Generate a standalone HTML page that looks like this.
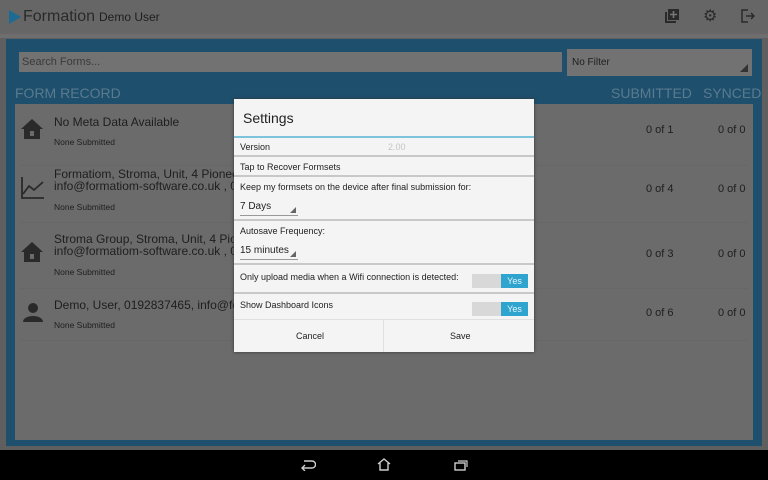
<!DOCTYPE html><html><head><style>
*{margin:0;padding:0;box-sizing:border-box}
body{width:768px;height:480px;overflow:hidden;background:#5f5f5f;font-family:"Liberation Sans",sans-serif;position:relative}
.a{position:absolute}
.t{color:#1e1e1e;white-space:nowrap}
.dl{position:absolute;left:0;right:0;height:2px;background:#c8c8c8}
.dt{position:absolute;left:6px;font-size:9px;color:#222;white-space:nowrap}
</style></head><body>
<div class="a" style="left:0;top:0;width:768px;height:34px;background:#666"></div>
<div class="a" style="left:0;top:34px;width:768px;height:4px;background:#6e6e6e"></div>
<svg class="a" style="left:9px;top:10px" width="12" height="14"><path d="M0 0L12 7L0 14Z" fill="#1d6a93"/></svg>
<div class="a t" style="left:23px;top:8px;font-size:16px;color:#2a2a2a">Formation</div>
<div class="a t" style="left:99px;top:10px;font-size:12px">Demo User</div>
<svg class="a" style="left:665px;top:9px" width="14" height="14"><rect x="3" y="0" width="11" height="11" fill="#2a2a2a"/><rect x="0" y="3" width="2" height="11" fill="#2a2a2a"/><rect x="0" y="12" width="11" height="2" fill="#2a2a2a"/><path d="M8.5 2v7M5 5.5h7" stroke="#777" stroke-width="1.6"/></svg>
<div class="a t" style="left:703px;top:6px;font-size:16px;color:#2a2a2a">⚙</div>
<svg class="a" style="left:741px;top:9px" width="14" height="14"><path d="M7 1H1v12h6" fill="none" stroke="#2a2a2a" stroke-width="1.5"/><path d="M5 7h8M10 4l3 3-3 3" fill="none" stroke="#2a2a2a" stroke-width="1.5"/></svg>
<div class="a" style="left:6px;top:39px;width:756px;height:407px;background:#1e4f6d"></div>
<div class="a" style="left:19px;top:52px;width:543px;height:20px;background:#727272"></div>
<div class="a t" style="left:22px;top:56px;font-size:11px;color:#3a3a3a">Search Forms...</div>
<div class="a" style="left:567px;top:49px;width:185px;height:27px;background:#727272"></div>
<div class="a t" style="left:572px;top:57px;font-size:10px">No Filter</div>
<svg class="a" style="left:740px;top:64px" width="8" height="8"><path d="M8 0V8H0Z" fill="#333"/></svg>
<div class="a t" style="left:15px;top:85px;font-size:14px;color:#5a7a8e">FORM RECORD</div>
<div class="a t" style="left:611px;top:85px;font-size:14px;color:#5a7a8e">SUBMITTED</div>
<div class="a t" style="left:703px;top:85px;font-size:14px;color:#5a7a8e">SYNCED</div>
<div class="a" style="left:15px;top:104px;width:738px;height:336px;background:#6b6b6b"></div>
<div class="a" style="left:20px;top:165px;width:728px;height:1px;background:#676767"></div>
<div class="a" style="left:20px;top:222px;width:728px;height:1px;background:#676767"></div>
<div class="a" style="left:20px;top:288px;width:728px;height:1px;background:#676767"></div>
<div class="a" style="left:20px;top:340px;width:728px;height:1px;background:#676767"></div>
<svg class="a" style="left:21px;top:119px" width="22" height="20"><path d="M11 0L22 10H19V20H3V10H0Z" fill="#2a2a2a"/><rect x="9" y="12" width="4" height="5" fill="#6b6b6b"/></svg>
<svg class="a" style="left:21px;top:177px" width="24" height="22"><path d="M1 0V21H23M2 17L8 9L13 13L22 5" fill="none" stroke="#2a2a2a" stroke-width="1.8"/></svg>
<svg class="a" style="left:21px;top:242px" width="22" height="20"><path d="M11 0L22 10H19V20H3V10H0Z" fill="#2a2a2a"/><rect x="9" y="12" width="4" height="5" fill="#6b6b6b"/></svg>
<svg class="a" style="left:22px;top:302px" width="22" height="20"><circle cx="11" cy="6" r="5" fill="#2a2a2a"/><path d="M1 20C1 12 21 12 21 20Z" fill="#2a2a2a"/></svg>
<div class="a t" style="left:54px;top:115px;font-size:12px">No Meta Data Available</div>
<div class="a t" style="left:54px;top:137px;font-size:8.5px">None Submitted</div>
<div class="a t" style="left:54px;top:168px;font-size:12px;line-height:12px">Formatiom, Stroma, Unit, 4 Pioneer W<br>info@formatiom-software.co.uk , 019</div>
<div class="a t" style="left:54px;top:202px;font-size:8.5px">None Submitted</div>
<div class="a t" style="left:54px;top:233px;font-size:12px;line-height:12px">Stroma Group, Stroma, Unit, 4 Pioneer<br>info@formatiom-software.co.uk , 029</div>
<div class="a t" style="left:54px;top:267px;font-size:8.5px">None Submitted</div>
<div class="a t" style="left:54px;top:298px;font-size:12px">Demo, User, 0192837465, info@forma</div>
<div class="a t" style="left:54px;top:320px;font-size:8.5px">None Submitted</div>
<div class="a t" style="left:646px;top:124px;font-size:11px">0 of 1</div><div class="a t" style="left:718px;top:124px;font-size:11px">0 of 0</div>
<div class="a t" style="left:646px;top:183px;font-size:11px">0 of 4</div><div class="a t" style="left:718px;top:183px;font-size:11px">0 of 0</div>
<div class="a t" style="left:646px;top:248px;font-size:11px">0 of 3</div><div class="a t" style="left:718px;top:248px;font-size:11px">0 of 0</div>
<div class="a t" style="left:646px;top:307px;font-size:11px">0 of 6</div><div class="a t" style="left:718px;top:307px;font-size:11px">0 of 0</div>

<div class="a" style="left:234px;top:99px;width:300px;height:253px;background:#f4f4f4;box-shadow:0 0 3px #333">
 <div class="a t" style="left:9px;top:11px;font-size:14px;color:#222">Settings</div>
 <div class="dl" style="top:37px;background:#7cc3dc"></div>
 <div class="dt" style="top:43px">Version</div>
 <div class="a t" style="left:154px;top:43px;font-size:9px;color:#c4c4c4">2.00</div>
 <div class="dl" style="top:56px"></div>
 <div class="dt" style="top:63px">Tap to Recover Formsets</div>
 <div class="dl" style="top:76px"></div>
 <div class="dt" style="top:83px">Keep my formsets on the device after final submission for:</div>
 <div class="a t" style="left:6px;top:102px;font-size:10px">7 Days</div>
 <div class="a" style="left:6px;top:116px;width:58px;height:1px;background:#999"></div>
 <svg class="a" style="left:56px;top:108px" width="6" height="6"><path d="M6 0V6H0Z" fill="#666"/></svg>
 <div class="dl" style="top:120px"></div>
 <div class="dt" style="top:127px">Autosave Frequency:</div>
 <div class="a t" style="left:6px;top:146px;font-size:10px">15 minutes</div>
 <div class="a" style="left:6px;top:160px;width:58px;height:1px;background:#999"></div>
 <svg class="a" style="left:56px;top:152px" width="6" height="6"><path d="M6 0V6H0Z" fill="#666"/></svg>
 <div class="dl" style="top:164px"></div>
 <div class="dt" style="top:173px">Only upload media when a Wifi connection is detected:</div>
 <div class="a" style="left:238px;top:175px;width:56px;height:14px;background:#d8d8d8"></div>
 <div class="a" style="left:267px;top:175px;width:27px;height:14px;background:#2ea4cf;color:#e6f4fa;font-size:9px;text-align:center;line-height:14px">Yes</div>
 <div class="dl" style="top:193px"></div>
 <div class="dt" style="top:201px">Show Dashboard Icons</div>
 <div class="a" style="left:238px;top:203px;width:56px;height:14px;background:#d8d8d8"></div>
 <div class="a" style="left:267px;top:203px;width:27px;height:14px;background:#2ea4cf;color:#e6f4fa;font-size:9px;text-align:center;line-height:14px">Yes</div>
 <div class="a" style="left:0;top:220px;width:300px;height:1px;background:#e0e0e0"></div>
 <div class="a" style="left:149px;top:220px;width:1px;height:33px;background:#e0e0e0"></div>
 <div class="a t" style="left:62px;top:232px;font-size:9px">Cancel</div>
 <div class="a t" style="left:216px;top:232px;font-size:9px">Save</div>
</div>
<div class="a" style="left:0;top:450px;width:768px;height:30px;background:#000"></div>
<svg class="a" style="left:300px;top:459px" width="16" height="12"><path d="M4 2h8a3 3 0 0 1 0 7H3M5 6l-3 3 3 3" fill="none" stroke="#ccc" stroke-width="1.4"/></svg>
<svg class="a" style="left:377px;top:458px" width="14" height="13"><path d="M1 6L7 1L13 6M3 5V12H11V5" fill="none" stroke="#ccc" stroke-width="1.4"/></svg>
<svg class="a" style="left:454px;top:460px" width="14" height="11"><rect x="1" y="3" width="10" height="7" fill="none" stroke="#ccc" stroke-width="1.4"/><path d="M4 1h9v6" fill="none" stroke="#ccc" stroke-width="1.2"/></svg>
</body></html>
